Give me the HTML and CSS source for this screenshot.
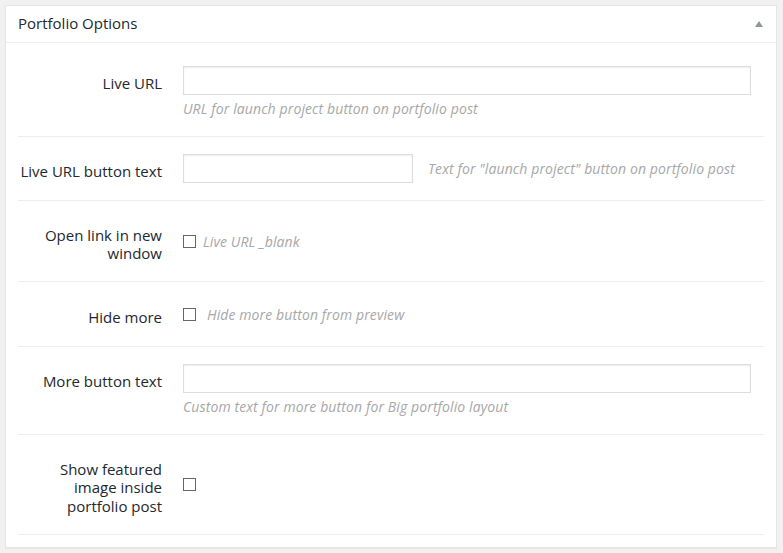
FILE: index.html
```html
<!DOCTYPE html>
<html>
<head>
<meta charset="utf-8">
<link rel="stylesheet" href="styles.css">
</head>
<body>
<div class="postbox">
  <div class="hndle">
    <span class="title">Portfolio Options</span>
    <span class="toggle"></span>
  </div>
  <div class="inside">
    <div class="row row-input">
      <div class="label">Live URL</div>
      <div class="field">
        <input class="text wide" type="text">
        <div class="desc block">URL for launch project button on portfolio post</div>
      </div>
    </div>
    <div class="row row-input">
      <div class="label">Live URL button text</div>
      <div class="field inline">
        <input class="text short" type="text">
        <span class="desc side">Text for "launch project" button on portfolio post</span>
      </div>
    </div>
    <div class="row row-check">
      <div class="label">Open link in new window</div>
      <div class="field inline">
        <span class="checkbox"></span>
        <span class="desc check-desc">Live URL _blank</span>
      </div>
    </div>
    <div class="row row-check">
      <div class="label">Hide more</div>
      <div class="field inline">
        <span class="checkbox"></span>
        <span class="desc check-desc wider">Hide more button from preview</span>
      </div>
    </div>
    <div class="row row-input">
      <div class="label">More button text</div>
      <div class="field">
        <input class="text wide" type="text">
        <div class="desc block">Custom text for more button for Big portfolio layout</div>
      </div>
    </div>
    <div class="row row-check">
      <div class="label">Show featured image inside portfolio post</div>
      <div class="field inline">
        <span class="checkbox"></span>
      </div>
    </div>
  </div>
</div>
</body>
</html>
```

FILE: styles.css
```css
html, body {
  margin: 0;
  padding: 0;
}
body {
  background: #f1f1f1;
  font-family: "Open Sans", "Liberation Sans", sans-serif;
  color: #23282d;
  font-size: 15px;
  width: 783px;
  height: 553px;
  overflow: hidden;
}
.postbox {
  margin: 5px 0 0 5px;
  width: 770px;
  border: 1px solid #e5e5e5;
  background: #fff;
  box-shadow: 0 1px 1px rgba(0, 0, 0, 0.04);
}
.hndle {
  display: flex;
  align-items: center;
  justify-content: space-between;
  padding: 7px 13px 9px 12px;
  height: 20px;
  line-height: 20px;
  border-bottom: 1px solid #eee;
}
.title {
  font-size: 15px;
}
.toggle {
  width: 0;
  height: 0;
  border-left: 4px solid transparent;
  border-right: 4px solid transparent;
  border-bottom: 6px solid #8f959c;
  margin-top: 2px;
}
.inside {
  padding: 6px 12px 12px 12px;
}
.row {
  display: flex;
  border-bottom: 1px solid #eee;
}
.row-input {
  align-items: flex-start;
  padding: 17px 0;
}
.row-check {
  align-items: center;
  padding: 21.5px 0;
}
.label {
  width: 142px;
  flex: none;
  text-align: right;
  line-height: 18.5px;
  margin-right: 21px;
  margin-left: 2px;
}
.row-input .label {
  margin-top: 8px;
}
.row-check .label {
  margin-top: 3px;
  margin-bottom: -3px;
}
.field {
  flex: 1;
  padding-right: 13px;
}
.field.inline {
  display: flex;
  align-items: center;
}
.text {
  display: block;
  box-sizing: border-box;
  height: 29px;
  border: 1px solid #ddd;
  box-shadow: inset 0 1px 2px rgba(0, 0, 0, 0.07);
  background: #fff;
  margin: 0;
  padding: 3px 5px;
  font: inherit;
}
.text.wide {
  width: 568px;
}
.text.short {
  width: 230px;
}
.desc {
  font-style: italic;
  font-size: 14px;
  letter-spacing: 0.11px;
  color: #a7a7a7;
  line-height: 21px;
}
.desc.block {
  margin-top: 3px;
}
.desc.side {
  margin-left: 15px;
}
.checkbox {
  display: block;
  box-sizing: border-box;
  width: 13px;
  height: 13px;
  border: 1px solid #666;
  background: #fff;
  flex: none;
}
.check-desc {
  margin-left: 7px;
}
.check-desc.wider {
  margin-left: 11px;
}
```
